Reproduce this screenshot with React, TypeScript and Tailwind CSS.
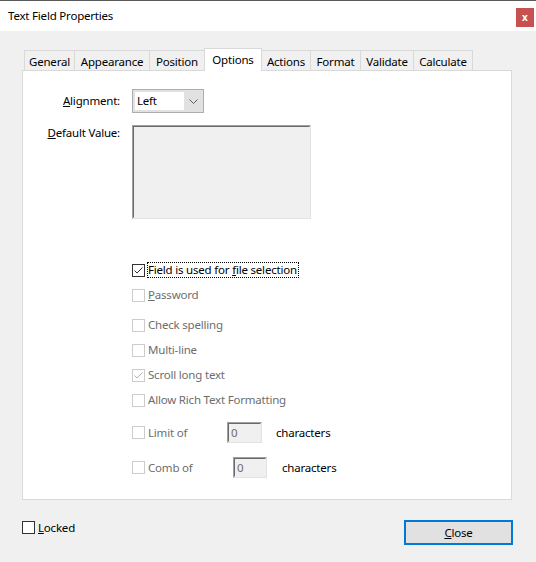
import React from "react";

type CbProps = { checked?: boolean; disabled?: boolean };

function Box({ checked, disabled }: CbProps) {
  return (
    <div
      className={
        "w-[13px] h-[13px] shrink-0 bg-white border flex items-center justify-center " +
        (disabled ? "border-[#cccccc]" : "border-[#333333]")
      }
    >
      {checked && (
        <svg width="11" height="11" viewBox="0 0 11 11">
          <polyline
            points="1.5,5.5 4,8 9.5,2.5"
            fill="none"
            stroke={disabled ? "#b0b0b0" : "#333333"}
            strokeWidth="1"
          />
        </svg>
      )}
    </div>
  );
}

function Sunken({ className, children }: { className: string; children?: React.ReactNode }) {
  return (
    <div
      className={
        "border border-t-[#a0a0a0] border-l-[#a0a0a0] border-r-[#e3e3e3] border-b-[#e3e3e3] " + className
      }
    >
      <div className="w-full h-full border border-t-[#696969] border-l-[#696969] border-r-[#f0f0f0] border-b-[#f0f0f0] bg-[#f0f0f0]">
        {children}
      </div>
    </div>
  );
}

function Tab({ label, w, first }: { label: string; w: string; first?: boolean }) {
  return (
    <div
      className={
        "h-[20px] bg-[#f0f0f0] border-t border-r border-[#d9d9d9] flex items-center justify-center pt-[2px] " +
        (first ? "border-l " : "") +
        w
      }
    >
      {label}
    </div>
  );
}

export default function App() {
  return (
    <div className="w-[536px] h-[562px] bg-[#f0f0f0] flex flex-col border-t border-[#5a5a5a] font-['Noto_Sans',sans-serif] text-[11.5px] tracking-[-0.2px] leading-[16px] text-black overflow-hidden">
      {/* title bar */}
      <div className="h-[30px] shrink-0 bg-white flex items-center justify-between pl-[8px] pr-[2px]">
        <span>Text Field Properties</span>
        <div className="w-[18px] h-[19px] mt-[3px] bg-[#c75050] text-white text-[10px] tracking-normal font-bold flex items-center justify-center leading-none pb-[2px]">
          x
        </div>
      </div>

      <div className="flex flex-col px-[22px] pt-[17px]">
        {/* tabs */}
        <div className="h-[22px] flex items-end pl-[2px]">
          <Tab label="General" w="w-[51px]" first />
          <Tab label="Appearance" w="w-[75px]" />
          <Tab label="Position" w="w-[55px]" />
          <div className="w-[58px] -ml-px h-[23px] -mb-px relative z-10 bg-white border-t border-l border-r border-[#d9d9d9] flex items-center justify-center">
            Options
          </div>
          <Tab label="Actions" w="w-[49px]" />
          <Tab label="Format" w="w-[50px]" />
          <Tab label="Validate" w="w-[53px]" />
          <Tab label="Calculate" w="w-[59px]" />
        </div>

        {/* panel */}
        <div className="w-[490px] h-[430px] bg-white border border-[#d9d9d9] flex flex-col pt-[18px]">
          <div className="flex items-center h-[24px]">
            <div className="w-[97px] text-right">
              <span className="underline">A</span>lignment:
            </div>
            <div className="ml-[12px] w-[72px] h-[24px] border border-[#adadad] bg-[#e1e1e1] flex items-center pl-[2px]">
              <div className="w-[49px] h-[18px] bg-white pl-[2px] flex items-center">Left</div>
              <div className="flex-1 flex items-center justify-center">
                <svg width="9" height="5" viewBox="0 0 9 5">
                  <polyline points="0.5,0.5 4.5,4.5 8.5,0.5" fill="none" stroke="#606060" strokeWidth="1" />
                </svg>
              </div>
            </div>
          </div>

          <div className="flex items-start mt-[12px]">
            <div className="w-[97px] text-right">
              <span className="underline">D</span>efault Value:
            </div>
            <Sunken className="ml-[12px] w-[179px] h-[94px]" />
          </div>

          <div className="flex flex-col ml-[109px] mt-[41px]">
            <div className="flex items-center h-[20px]">
              <Box checked />
              <span className="ml-[2px] border border-dotted border-black leading-[14px] pr-[1px]">
                Field is used for <span className="underline">f</span>ile selection
              </span>
            </div>
            <div className="flex items-center h-[20px] mt-[5px] text-[#6d6d6d]">
              <Box disabled />
              <span className="ml-[3px]">
                <span className="underline">P</span>assword
              </span>
            </div>
            <div className="flex items-center h-[20px] mt-[10px] text-[#6d6d6d]">
              <Box disabled />
              <span className="ml-[3px]">Check spelling</span>
            </div>
            <div className="flex items-center h-[20px] mt-[5px] text-[#6d6d6d]">
              <Box disabled />
              <span className="ml-[3px]">Multi-line</span>
            </div>
            <div className="flex items-center h-[20px] mt-[5px] text-[#6d6d6d]">
              <Box disabled checked />
              <span className="ml-[3px]">Scroll long text</span>
            </div>
            <div className="flex items-center h-[20px] mt-[5px] text-[#6d6d6d]">
              <Box disabled />
              <span className="ml-[3px]">Allow Rich Text Formatting</span>
            </div>
            <div className="flex items-center h-[21px] mt-[12px]">
              <Box disabled />
              <span className="ml-[3px] w-[79px] text-[#6d6d6d]">Limit of</span>
              <Sunken className="w-[35px] h-[21px]">
                <div className="pl-[2px] text-[#6d6d6d] leading-[17px]">0</div>
              </Sunken>
              <span className="ml-[14px]">characters</span>
            </div>
            <div className="flex items-center h-[21px] mt-[14px]">
              <Box disabled />
              <span className="ml-[3px] w-[85px] text-[#6d6d6d]">Comb of</span>
              <Sunken className="w-[34px] h-[21px]">
                <div className="pl-[2px] text-[#6d6d6d] leading-[17px]">0</div>
              </Sunken>
              <span className="ml-[15px]">characters</span>
            </div>
          </div>
        </div>

        {/* bottom */}
        <div className="flex justify-between items-start mt-[20px]">
          <div className="flex items-center h-[13px] mt-[1px]">
            <Box />
            <span className="ml-[3px]">
              <span className="underline">L</span>ocked
            </span>
          </div>
          <div className="w-[109px] h-[25px] mr-[1px] border-2 border-[#0078d7] bg-[#e1e1e1] flex items-center justify-center">
            <span>
              <span className="underline">C</span>lose
            </span>
          </div>
        </div>
      </div>
    </div>
  );
}
